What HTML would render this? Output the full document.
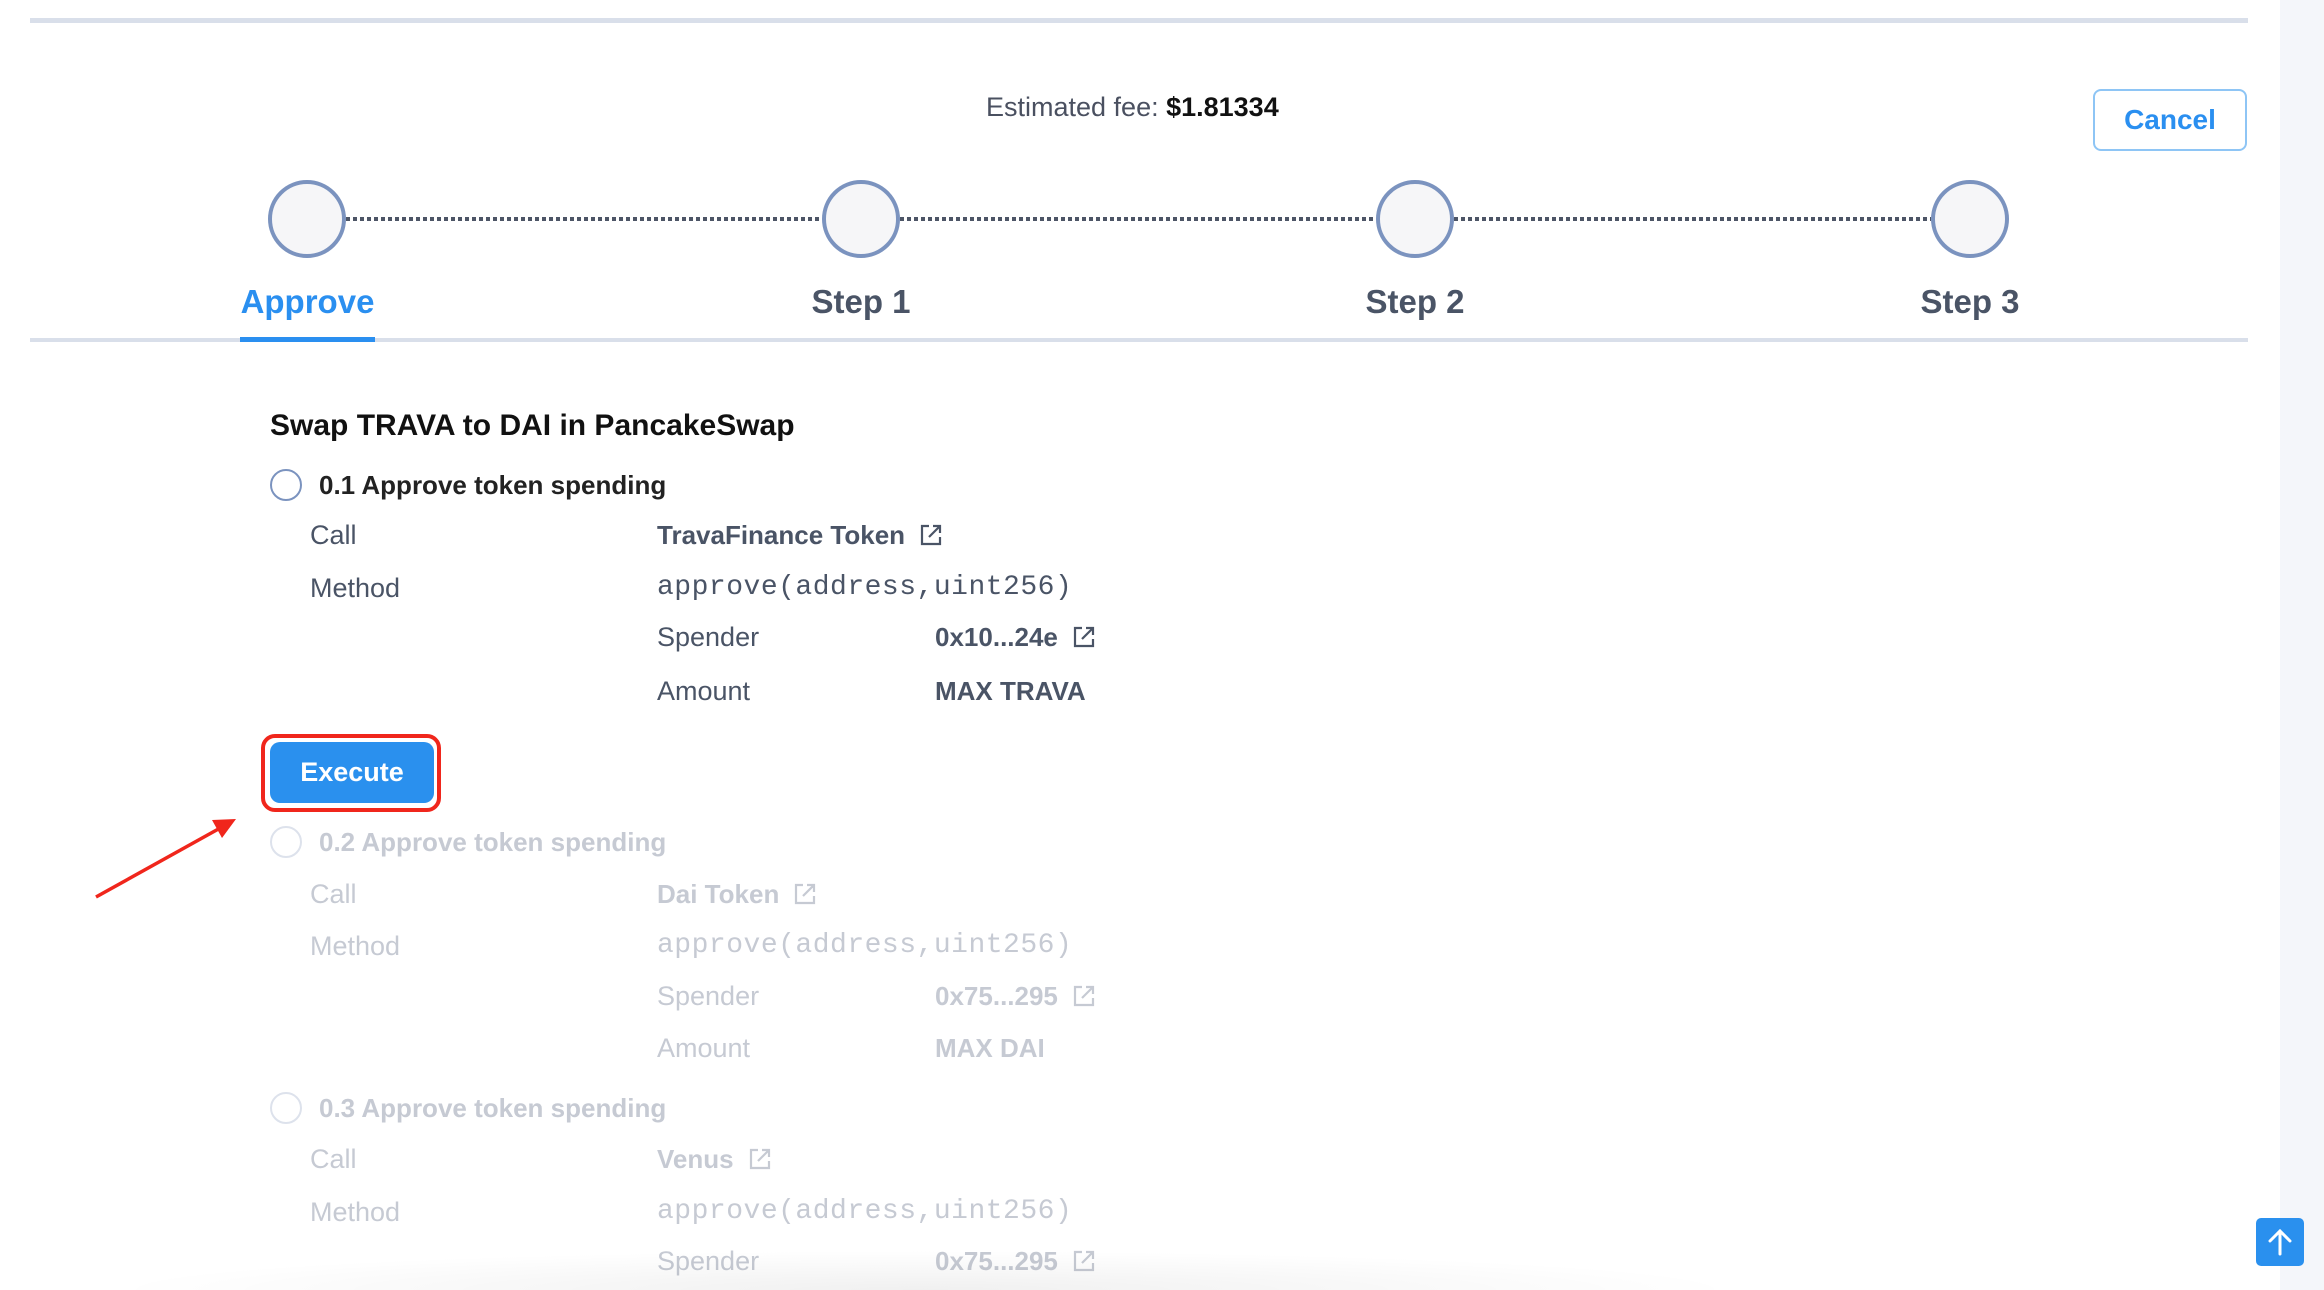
<!DOCTYPE html>
<html><head><meta charset="utf-8"><style>
*{margin:0;padding:0;box-sizing:border-box}
body{width:2324px;height:1290px;overflow:hidden;background:#fff;font-family:"Liberation Sans",Arial,sans-serif;position:relative}
.a{position:absolute;white-space:nowrap;line-height:40px}
.side{position:absolute;left:2280px;top:0;width:44px;height:1290px;background:#f4f6fa}
.ln{position:absolute;background:#d9dfea}
.c{position:absolute;width:78px;height:78px;border-radius:50%;border:4px solid #7b93bf;background:#f6f6f8}
.dot{position:absolute;height:4px;top:217px;background-image:linear-gradient(90deg,#4d5566 60%,transparent 60%);background-size:7px 4px}
.st{font-size:33px;font-weight:bold;color:#4a5466;top:282px}
.lab{font-size:27px;color:#4a5466}
.val{font-size:26px;color:#4a5466;font-weight:bold}
.mono{font-family:"Liberation Mono","DejaVu Sans Mono",monospace;font-size:28px;color:#4a5466;letter-spacing:0.5px}
.rad{position:absolute;width:32px;height:32px;border-radius:50%;border:2px solid #7b93bf}
.hd{font-size:26px;font-weight:bold;color:#222}
.f .lab,.f .val,.f .mono,.f .hd{color:#c6cad3}
.f .rad{border-color:#dde2ec}
.ext{display:inline-block;vertical-align:middle;margin-left:14px;margin-top:-4px}
</style></head><body>
<div class="side"></div>
<div class="ln" style="left:30px;top:18px;width:2218px;height:5px"></div>
<div class="a" style="left:986px;top:87px;font-size:27px;color:#4a5060">Estimated fee: <span style="color:#111;font-weight:bold">$1.81334</span></div>
<div class="a" style="left:2093px;top:89px;width:154px;height:62px;border:2px solid #8ec5f5;border-radius:8px;text-align:center;line-height:58px;font-size:28px;color:#2a8ff0;font-weight:bold">Cancel</div>

<div class="dot" style="left:346px;width:476px"></div>
<div class="dot" style="left:900px;width:476px"></div>
<div class="dot" style="left:1454px;width:477px"></div>
<div class="c" style="left:268px;top:180px"></div>
<div class="c" style="left:822px;top:180px"></div>
<div class="c" style="left:1376px;top:180px"></div>
<div class="c" style="left:1931px;top:180px"></div>
<div class="a st" style="left:240px;width:135px;text-align:center;color:#2a8ff0">Approve</div>
<div class="a st" style="left:761px;width:200px;text-align:center">Step 1</div>
<div class="a st" style="left:1315px;width:200px;text-align:center">Step 2</div>
<div class="a st" style="left:1870px;width:200px;text-align:center">Step 3</div>
<div class="ln" style="left:30px;top:338px;width:2218px;height:4px"></div>
<div class="ln" style="left:240px;top:337px;width:135px;height:5px;background:#2a8ff0"></div>

<div class="a" style="left:270px;top:406px;font-size:30px;font-weight:bold;color:#111">Swap TRAVA to DAI in PancakeSwap</div>

<div>
<div class="rad" style="left:270px;top:469px"></div>
<div class="a hd" style="left:319px;top:465px">0.1 Approve token spending</div>
<div class="a lab" style="left:310px;top:515px">Call</div>
<div class="a val" style="left:657px;top:515px">TravaFinance Token<svg class="ext" width="24" height="24" viewBox="0 0 24 24" fill="none" stroke="#4a5466" stroke-width="2.2"><path d="M10 3H3v18h18v-7M14 3h7v7M21 3L10 14"/></svg></div>
<div class="a lab" style="left:310px;top:568px">Method</div>
<div class="a mono" style="left:657px;top:568px">approve(address,uint256)</div>
<div class="a lab" style="left:657px;top:617px">Spender</div>
<div class="a val" style="left:935px;top:617px">0x10...24e<svg class="ext" width="24" height="24" viewBox="0 0 24 24" fill="none" stroke="#4a5466" stroke-width="2.2"><path d="M10 3H3v18h18v-7M14 3h7v7M21 3L10 14"/></svg></div>
<div class="a lab" style="left:657px;top:671px">Amount</div>
<div class="a val" style="left:935px;top:671px">MAX TRAVA</div>
</div>

<div class="a" style="left:261px;top:734px;width:180px;height:78px;border:4px solid #f0261c;border-radius:14px"></div>
<div class="a" style="left:270px;top:742px;width:164px;height:61px;background:#2a90ee;border-radius:10px;color:#fff;font-size:27px;font-weight:bold;text-align:center;line-height:61px">Execute</div>
<svg style="position:absolute;left:0;top:0" width="400" height="1000"><line x1="96" y1="897" x2="222" y2="827" stroke="#f0261c" stroke-width="3.5"/><polygon points="236,819 212,820 222,838" fill="#f0261c"/></svg>

<div class="f">
<div class="rad" style="left:270px;top:826px"></div>
<div class="a hd" style="left:319px;top:822px">0.2 Approve token spending</div>
<div class="a lab" style="left:310px;top:874px">Call</div>
<div class="a val" style="left:657px;top:874px">Dai Token<svg class="ext" width="24" height="24" viewBox="0 0 24 24" fill="none" stroke="#c6cad3" stroke-width="2.2"><path d="M10 3H3v18h18v-7M14 3h7v7M21 3L10 14"/></svg></div>
<div class="a lab" style="left:310px;top:926px">Method</div>
<div class="a mono" style="left:657px;top:926px">approve(address,uint256)</div>
<div class="a lab" style="left:657px;top:976px">Spender</div>
<div class="a val" style="left:935px;top:976px">0x75...295<svg class="ext" width="24" height="24" viewBox="0 0 24 24" fill="none" stroke="#c6cad3" stroke-width="2.2"><path d="M10 3H3v18h18v-7M14 3h7v7M21 3L10 14"/></svg></div>
<div class="a lab" style="left:657px;top:1028px">Amount</div>
<div class="a val" style="left:935px;top:1028px">MAX DAI</div>

<div class="rad" style="left:270px;top:1092px"></div>
<div class="a hd" style="left:319px;top:1088px">0.3 Approve token spending</div>
<div class="a lab" style="left:310px;top:1139px">Call</div>
<div class="a val" style="left:657px;top:1139px">Venus<svg class="ext" width="24" height="24" viewBox="0 0 24 24" fill="none" stroke="#c6cad3" stroke-width="2.2"><path d="M10 3H3v18h18v-7M14 3h7v7M21 3L10 14"/></svg></div>
<div class="a lab" style="left:310px;top:1192px">Method</div>
<div class="a mono" style="left:657px;top:1192px">approve(address,uint256)</div>
<div class="a lab" style="left:657px;top:1241px">Spender</div>
<div class="a val" style="left:935px;top:1241px">0x75...295<svg class="ext" width="24" height="24" viewBox="0 0 24 24" fill="none" stroke="#c6cad3" stroke-width="2.2"><path d="M10 3H3v18h18v-7M14 3h7v7M21 3L10 14"/></svg></div>
</div>

<div style="position:absolute;left:100px;top:1250px;width:1650px;height:40px;background:radial-gradient(ellipse at 50% 100%,rgba(0,0,0,0.06),rgba(0,0,0,0) 70%)"></div>
<div style="position:absolute;left:2256px;top:1218px;width:48px;height:48px;background:#2a90ee;border-radius:5px"><svg width="48" height="48" viewBox="0 0 48 48" fill="none" stroke="#fff" stroke-width="3" stroke-linecap="round"><path d="M24 36V13M14 23l10-10 10 10"/></svg></div>
</body></html>
